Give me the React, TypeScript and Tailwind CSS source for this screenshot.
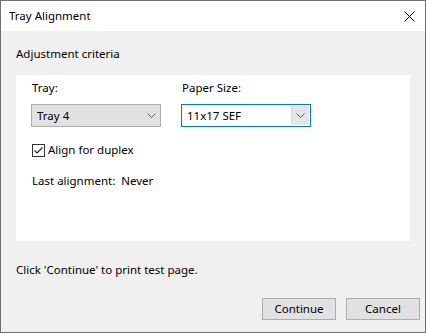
import React from "react";

const Chevron = () => (
  <svg width="9" height="5" viewBox="0 0 9 5" className="block">
    <path d="M0.5 0.5 L4.5 4.5 L8.5 0.5" fill="none" stroke="#606060" strokeWidth="1" />
  </svg>
);

export default function App() {
  return (
    <div
      className="w-[426px] h-[333px] border border-[#6f6f6f] flex flex-col bg-[#f0f0f0] text-[11.5px] text-black"
      style={{ fontFamily: '"Noto Sans", "Segoe UI", sans-serif' }}
    >
      <div className="h-[30px] bg-white flex items-center justify-between pl-[8px] pr-[10px]">
        <span className="leading-[16px]">Tray Alignment</span>
        <svg width="11" height="11" viewBox="0 0 11 11" className="block">
          <path d="M0.5 0.5 L10.5 10.5 M10.5 0.5 L0.5 10.5" stroke="#000" strokeWidth="1" />
        </svg>
      </div>
      <div className="flex-1 flex flex-col px-[15px]">
        <div className="pt-[15px] leading-[16px]">Adjustment criteria</div>
        <div className="mt-[13px] h-[166px] bg-white pl-[15px] pt-[5px] flex flex-col">
          <div className="flex gap-[20px]">
            <div className="flex flex-col w-[130px]">
              <span className="leading-[16px] pl-[1px]">Tray:</span>
              <div className="mt-[8px] h-[23px] bg-[#e1e1e1] border border-[#adadad] flex items-center justify-between pl-[5px] pr-[4px]">
                <span className="leading-[16px]">Tray 4</span>
                <Chevron />
              </div>
            </div>
            <div className="flex flex-col w-[130px]">
              <span className="leading-[16px] pl-[1px]">Paper Size:</span>
              <div className="mt-[8px] h-[23px] bg-white border border-[#0078d7] flex items-stretch">
                <div className="flex-1 flex items-center pl-[5px]">
                  <span className="leading-[16px]">11x17 SEF</span>
                </div>
                <div className="w-[18px] my-[1px] mr-[1px] bg-[#e5e5e5] border-l border-[#d9d9d9] flex items-center justify-center">
                  <Chevron />
                </div>
              </div>
            </div>
          </div>
          <div className="mt-[15px] flex items-center pl-[1px]">
            <div className="w-[13px] h-[13px] border border-[#333] flex items-center justify-center">
              <svg width="11" height="11" viewBox="0 0 11 11" className="block">
                <path d="M1.5 5.5 L4 8 L9.5 2.5" fill="none" stroke="#222" strokeWidth="1.2" />
              </svg>
            </div>
            <span className="ml-[3px] leading-[16px]">Align for duplex</span>
          </div>
          <div className="mt-[15px] pl-[1px] leading-[16px]">
            Last alignment:&nbsp;&nbsp;Never
          </div>
        </div>
        <div className="mt-[21px] leading-[16px]">Click 'Continue' to print test page.</div>
        <div className="mt-[20px] flex justify-end gap-[10px] mr-[-10px]">
          <button className="w-[74px] h-[22px] bg-[#e1e1e1] border border-[#adadad] leading-[16px]">Continue</button>
          <button className="w-[74px] h-[22px] bg-[#e1e1e1] border border-[#adadad] leading-[16px]">Cancel</button>
        </div>
      </div>
    </div>
  );
}
